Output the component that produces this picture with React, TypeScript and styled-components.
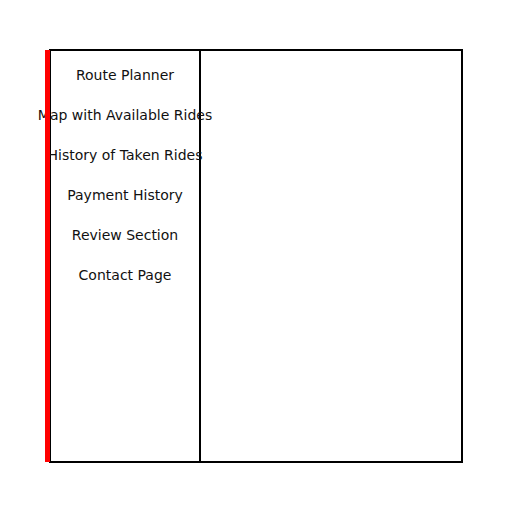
import styled, { createGlobalStyle } from "styled-components";

const GlobalStyle = createGlobalStyle`
  html, body {
    margin: 0;
    padding: 0;
    background: #ffffff;
  }
  body {
    font-family: "DejaVu Sans", "Liberation Sans", sans-serif;
  }
`;

const menuItems = [
  "Route Planner",
  "Map with Available Rides",
  "History of Taken Rides",
  "Payment History",
  "Review Section",
  "Contact Page",
];

const App: React.FC = () => {
  return (
    <>
      <GlobalStyle />
      <Page>
        <Frame>
          <Sidebar>
            <Menu>
              {menuItems.map((item) => (
                <MenuItem key={item}>{item}</MenuItem>
              ))}
            </Menu>
          </Sidebar>
          <Content />
        </Frame>
      </Page>
    </>
  );
};

export default App;

const Page = styled.div`
  padding: 49px;
`;

const Frame = styled.div`
  box-sizing: border-box;
  width: 414px;
  height: 414px;
  border: 2px solid #000;
  display: flex;
`;

const Sidebar = styled.nav`
  position: relative;
  width: 150px;
  flex-shrink: 0;
  border-right: 2px solid #000;
  box-sizing: border-box;

  &::after {
    content: "";
    position: absolute;
    top: -1px;
    bottom: -1px;
    left: -6px;
    width: 5px;
    background: #ff0000;
    z-index: 2;
  }
`;

const Menu = styled.ul`
  list-style: none;
  margin: 0;
  padding: 16px 0 0;
  display: flex;
  flex-direction: column;
  align-items: center;
  gap: 24px;
`;

const MenuItem = styled.li`
  font-size: 14px;
  line-height: 16px;
  color: #111;
  white-space: nowrap;
`;

const Content = styled.main`
  flex: 1;
`;
